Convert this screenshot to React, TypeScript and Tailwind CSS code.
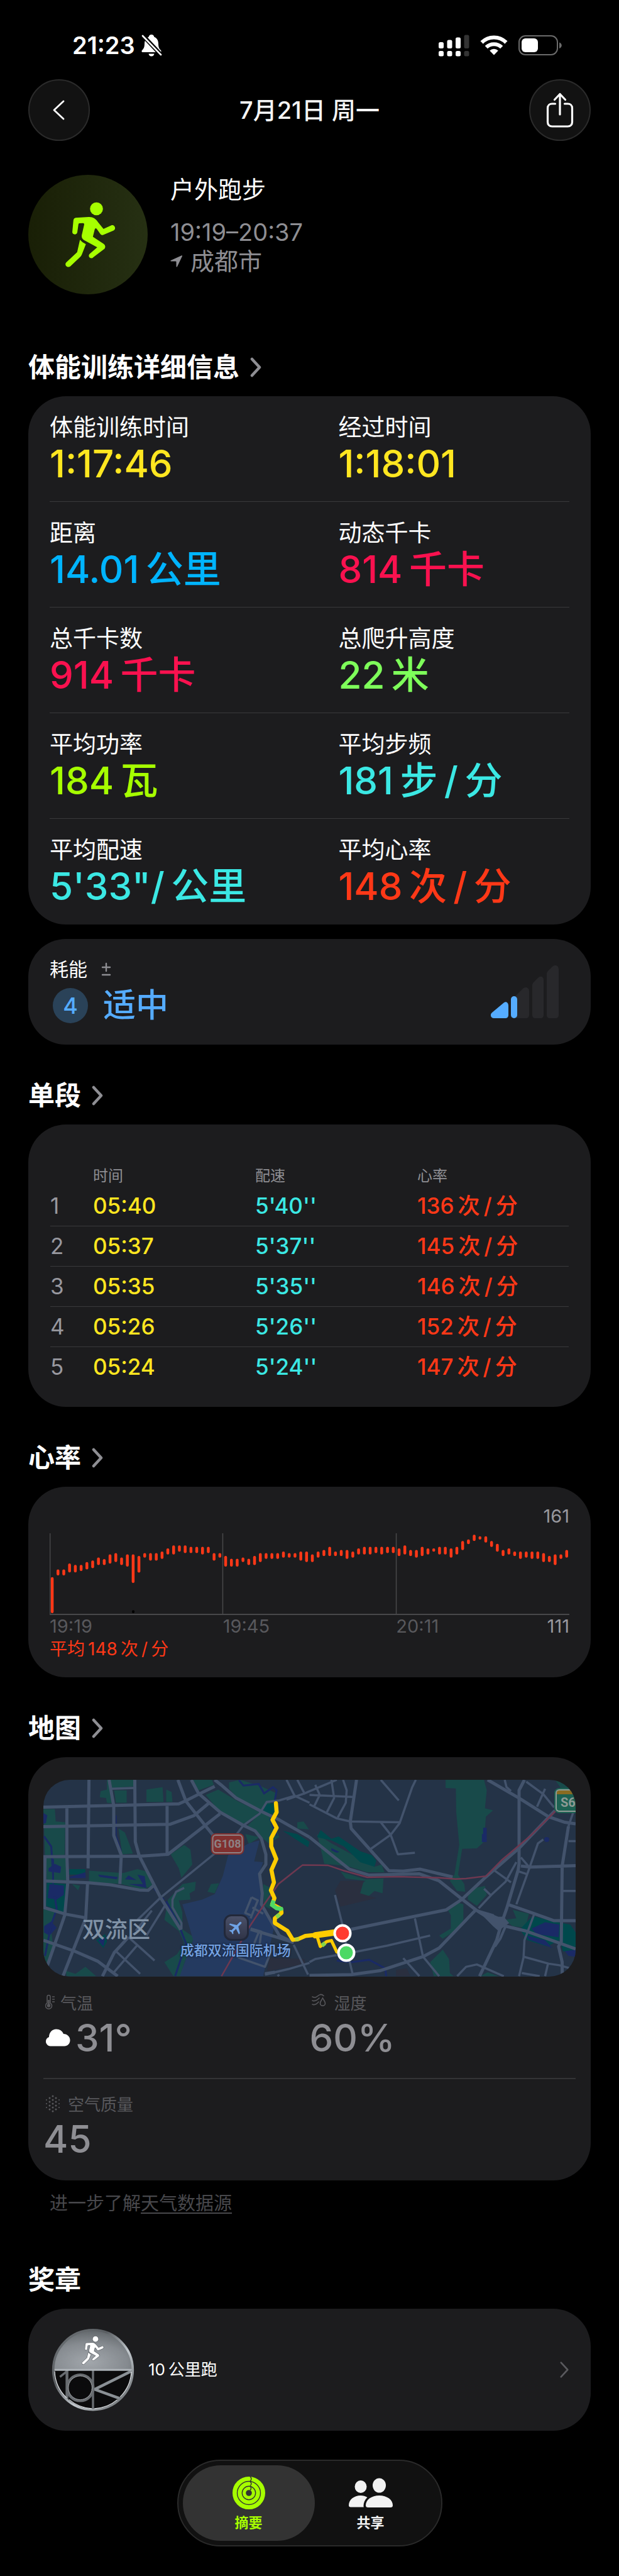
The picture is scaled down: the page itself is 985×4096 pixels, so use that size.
import { memo } from 'react'
import type { ReactNode } from 'react'
import { MdFlight } from 'react-icons/md'

type Metric = { label: string; value: string; color: string }

const METRICS: Metric[][] = [
  [
    { label: '体能训练时间', value: '1:17:46', color: 'text-[#ffe620]' },
    { label: '经过时间', value: '1:18:01', color: 'text-[#ffe620]' },
  ],
  [
    { label: '距离', value: '14.01\u2009公里', color: 'text-[#00b4ff]' },
    { label: '动态千卡', value: '814\u2009千卡', color: 'text-[#fa114f]' },
  ],
  [
    { label: '总千卡数', value: '914\u2009千卡', color: 'text-[#fa114f]' },
    { label: '总爬升高度', value: '22\u2009米', color: 'text-[#7eff5a]' },
  ],
  [
    { label: '平均功率', value: '184\u2009瓦', color: 'text-[#a6ff00]' },
    { label: '平均步频', value: '181\u2009步\u2009/\u2009分', color: 'text-[#3be8e4]' },
  ],
  [
    { label: '平均配速', value: `5'33"/\u2009公里`, color: 'text-[#3be8e4]' },
    { label: '平均心率', value: '148\u2009次\u2009/\u2009分', color: 'text-[#ff3817]' },
  ],
]

const LAPS = [
  { time: '05:40', pace: "5'40''", bpm: 136 },
  { time: '05:37', pace: "5'37''", bpm: 145 },
  { time: '05:35', pace: "5'35''", bpm: 146 },
  { time: '05:26', pace: "5'26''", bpm: 152 },
  { time: '05:24', pace: "5'24''", bpm: 147 },
]

// [top, bottom] of each heart rate range
const HEART: [number, number][] = [
  [783, 970], [743, 774], [743, 774], [712, 758], [720, 758], [720, 751], [705, 743], [697, 736], [681, 720],
  [689, 720], [665, 712], [658, 704], [681, 720], [665, 728], [665, 813], [673, 759], [658, 681], [658, 697],
  [658, 697], [650, 688], [634, 665], [618, 665], [618, 650], [618, 658], [626, 658], [626, 658], [626, 665],
  [626, 658], [658, 697], [658, 681], [673, 728], [688, 728], [688, 728], [681, 704], [688, 720], [673, 720],
  [658, 704], [658, 688], [658, 688], [658, 688], [650, 681], [658, 681], [658, 681], [650, 697], [650, 704],
  [665, 704], [650, 681], [642, 673], [626, 673], [650, 673], [642, 673], [642, 688], [650, 681], [634, 665],
  [626, 665], [626, 665], [626, 658], [626, 665], [626, 658], [626, 658], [634, 673], [618, 665], [642, 673],
  [642, 681], [626, 673], [634, 665], [634, 650], [626, 665], [626, 665], [634, 681], [626, 665], [595, 642],
  [587, 611], [563, 595], [571, 587], [571, 603], [595, 626], [610, 650], [642, 673], [634, 665], [650, 673],
  [650, 688], [650, 681], [650, 688], [650, 688], [658, 704], [673, 704], [665, 720], [665, 688], [642, 681],
]

// Icons
const RunnerShape = () => (
  <g fill="currentColor">
    <circle cx="228" cy="72" r="41.5" />
    <path d="M95 130 178 125C205 124 222 135 237 157L273 201 322 179C345 170 358 203 336 212L276 238C266 243 258 240 252 232L230 201Q221 192 217 203L205 252 274 297Q291 309 280 328L208 383C194 399 168 380 184 362L233 319 148 273Q130 262 134 240L149 174Q150 164 142 164L119 165Q112 165 112 173L105 222C103 242 71 240 73 220L80 146Q82 132 95 130Z" />
    <path d="M122 271Q135 288 160 299L134 366Q131 374 125 380L60 441C42 455 18 432 35 415L104 350Z" />
  </g>
)

const Chevron = ({ className }: { className: string }) => (
  <svg className={className} viewBox="0 0 20 32" fill="none" stroke="currentColor" strokeLinecap="round" strokeLinejoin="round" aria-hidden="true">
    <path d="M4 3 16 16 4 29" />
  </svg>
)

const StatusBar = () => (
  <div className="flex items-center justify-between pl-[115px] pr-[91px] h-9">
    <div className="flex items-center gap-[9px] text-white">
      <span className="text-[38px] leading-9 font-semibold">21:23</span>
      <svg className="w-[34px] h-9" viewBox="0 0 34 36" aria-label="静音">
        <path fill="#fff" d="M17 1c2.400 0 4 1.500 4.400 3.700C26 6.500 28 10.500 28 15.500c0 6 1.800 8.500 4 10.500 1 1.200.600 3-1 3H3C1.300 29 1 27.200 2 26c2.200-2.200 4-4.500 4-10.500 0-5 2.300-9 6.600-10.800C13 2.500 14.600 1 17 1ZM12.500 31.500h9C21 34 19.300 35.500 17 35.500s-4-1.500-4.500-4Z" />
        <path stroke="#000" strokeWidth="6.500" d="M3 2 32 33" />
        <path stroke="#fff" strokeWidth="2.600" strokeLinecap="round" d="M3 3 32 33" />
      </svg>
    </div>
    <div className="flex items-center gap-[17px]">
      <svg className="w-[49px] h-9" viewBox="0 0 49 36" fill="#fff" aria-hidden="true">
        <rect x="0" y="13" width="8" height="10" rx="2.500" />
        <rect x="13.500" y="9.500" width="8" height="13.500" rx="2.500" />
        <rect x="27" y="5.500" width="8" height="17.500" rx="2.500" />
        <rect x="40.500" y="1.500" width="8" height="21.500" rx="2.500" fill="#333" />
        <rect x="0" y="27" width="8" height="8.500" rx="2.500" />
        <rect x="13.500" y="27" width="8" height="8.500" rx="2.500" />
        <rect x="27" y="27" width="8" height="8.500" rx="2.500" />
        <rect x="40.500" y="27" width="8" height="8.500" rx="2.500" fill="#333" />
      </svg>
      <svg className="w-11 h-9" viewBox="0 0 44 36" fill="none" stroke="#fff" strokeWidth="6" aria-hidden="true">
        <path d="M2.600 13.500a27.500 27.500 0 0 1 38.800 0" />
        <path d="M9.800 21.200a17.300 17.300 0 0 1 24.400 0" />
        <path fill="#fff" stroke="none" d="M22 33.500 15.200 26.600a9.800 9.800 0 0 1 13.600 0Z" />
      </svg>
      <svg className="w-[69px] h-9" viewBox="0 0 69 36" aria-hidden="true">
        <rect x="1" y="3" width="61" height="30" rx="10" fill="none" stroke="#6b6b6b" strokeWidth="2" />
        <rect x="5" y="7" width="26" height="22" rx="6" fill="#fff" />
        <path d="M65 13.500c5 1.500 5 8 0 9.500Z" fill="#6b6b6b" />
      </svg>
    </div>
  </div>
)

const circleButton =
  'flex items-center justify-center w-[98px] h-[98px] text-white bg-[#121212] rounded-full border-2 border-[#2b2b2b]'

const Toolbar = () => (
  <header className="flex justify-between items-center mt-9">
    <button className={circleButton} aria-label="返回">
      <svg className="w-5 h-8" viewBox="0 0 20 32" fill="none" stroke="currentColor" strokeWidth="2.800" strokeLinecap="round" strokeLinejoin="round">
        <path d="M17 2 2 16 17 30" />
      </svg>
    </button>
    <h1 className="text-[38px] leading-[48px] font-medium text-[#f5f5f5]">7月21日 周一</h1>
    <button className={circleButton} aria-label="共享">
      <svg className="w-11 h-14" viewBox="0 0 44 56" fill="none" stroke="currentColor" strokeWidth="3.200" strokeLinecap="round" strokeLinejoin="round">
        <path d="M14.500 18H9.500C5.500 18 2.500 20.500 2.500 25v22c0 4.500 3 7 7 7h25c4 0 7-2.500 7-7V25c0-4.500-3-7-7-7h-5" />
        <path d="M22 35V2.500M13.500 11.500 22 2.500l8.500 9" />
      </svg>
    </button>
  </header>
)

const Workout = () => (
  <section className="flex gap-9 mt-[54px]">
    <div className="flex shrink-0 items-center justify-center w-[190px] h-[190px] rounded-full bg-linear-to-r from-[#191f06] to-[#263013] text-[#a6ff00]">
      <svg className="w-[90px] h-[106px]" viewBox="-8 25 363 425" aria-hidden="true">
        <RunnerShape />
      </svg>
    </div>
    <div className="text-[38px] leading-[46px]">
      <p className="text-white">户外跑步</p>
      <p className="mt-[22px] text-[#8e8e93]">19:19–20:37</p>
      <p className="flex items-center gap-[13px] text-[#8e8e93]">
        <svg className="w-[19px] h-[19px]" viewBox="0 0 19 19" fill="currentColor" aria-hidden="true">
          <path d="M18 .300c.800-.300 1.200.200 1 1l-8 16.600c-.500.900-1.500.700-1.500-.300V10.400c0-.500-.300-.800-.800-.800H1.200c-1 0-1.200-1.100-.300-1.600Z" />
        </svg>
        成都市
      </p>
    </div>
  </section>
)

const SectionTitle = ({ children, link = true }: { children: ReactNode; link?: boolean }) => (
  <h2 className="mb-[18px] text-[42px] leading-[56px] font-bold text-white">
    {link ? (
      <a href="#" className="inline-flex items-center gap-4">
        {children}
        <Chevron className="w-5 h-8 text-[#8e8e93] stroke-[4.500]" />
      </a>
    ) : (
      children
    )}
  </h2>
)

const card = 'bg-[#1c1c1e] rounded-[60px]'

const Details = () => (
  <section className="mt-[88px]">
    <SectionTitle>体能训练详细信息</SectionTitle>
    <div className={`${card} px-[34px]`}>
      {METRICS.map((row) => (
        <div
          key={row[0].label}
          className="grid grid-cols-[5fr_4fr] pt-[26px] pb-[27px] border-b border-[#39393b] last:border-transparent"
        >
          {row.map((m) => (
            <div key={m.label}>
              <p className="text-[37px] leading-[48px] text-white">{m.label}</p>
              <p className={`text-[60px] leading-[66px] font-medium whitespace-nowrap ${m.color}`}>{m.value}</p>
            </div>
          ))}
        </div>
      ))}
    </div>
    <div className={`${card} flex items-center justify-between mt-[23px] pt-7 pb-7 pl-[34px] pr-[51px]`}>
      <div>
        <p className="flex items-center gap-[22px] text-[30px] leading-10 text-white">
          耗能
          <svg className="w-4 h-[22px]" viewBox="0 0 16 22" stroke="#8e8e93" strokeWidth="2.400" strokeLinecap="round" aria-hidden="true">
            <path d="M2 8h12M8 2v12M2 20h12" />
          </svg>
        </p>
        <p className="flex items-center gap-6 pl-[5px] mt-1 text-[52px] leading-[68px] font-medium text-[#55acff]">
          <span className="flex items-center justify-center w-14 h-14 text-[36px] leading-10 bg-[#2a4258] rounded-full">4</span>
          适中
        </p>
      </div>
      <svg className="w-[108px] h-[84px]" viewBox="0 0 108 84" aria-hidden="true">
        <path fill="#28282b" d="M37 51 51 37c4-4 10-2 10 4v37c0 4-2 6-5 6H37ZM66 32c0-3 1-4 3-6l6-6c4-4 9-2 9 3v56c0 3-2 5-5 5h-8c-3 0-5-2-5-5ZM89 14c0-3 1-4 3-6l6-6c4-4 10-2 10 4v73c0 3-2 5-5 5h-9c-3 0-5-2-5-5Z" />
        <path fill="#55acff" d="M2 75 20 60c4-4 8-1 8 4v15c0 3-2 5-5 5H5c-5 0-7-6-3-9Z" />
        <rect x="32" y="49" width="10" height="35" rx="5" fill="#55acff" />
      </svg>
    </div>
  </section>
)

const Laps = () => (
  <section className="mt-[53px]">
    <SectionTitle>单段</SectionTitle>
    <div className={`${card} px-[35px] pt-[67px] pb-8`}>
      <table className="w-full table-fixed text-left">
        <thead>
          <tr className="h-[30px] text-2xl leading-[30px] text-[#8e8e93]">
            <th className="w-[68px]" aria-label="序号" />
            <th className="w-[258px] font-normal">时间</th>
            <th className="w-[258px] font-normal">配速</th>
            <th className="font-normal">心率</th>
          </tr>
        </thead>
        <tbody>
          {LAPS.map((lap, i) => (
            <tr key={lap.time} className="h-16 text-[35px] leading-[48px] border-b border-[#39393b] last:border-0">
              <td className="text-[#98989f]">{i + 1}</td>
              <td className="font-medium text-[#ffe620]">{lap.time}</td>
              <td className="font-medium text-[#3be8e4]">{lap.pace}</td>
              <td className="font-medium whitespace-nowrap text-[#ff3817]">{`${lap.bpm}\u2009次\u2009/\u2009分`}</td>
            </tr>
          ))}
        </tbody>
      </table>
    </div>
  </section>
)

const HeartRate = () => (
  <section className="mt-[53px]">
    <SectionTitle>心率</SectionTitle>
    <div className={`${card} px-[34px] py-[27px] text-[29px] leading-9`}>
      <p className="text-right leading-10 text-[#98989f]">161</p>
      <svg className="block mt-[7px] w-full h-[130px]" viewBox="125 555 1318 425" preserveAspectRatio="none" aria-label="心率图表">
        <g stroke="#48484a" strokeWidth="1.500">
          <path vectorEffect="non-scaling-stroke" d="M126 555V980M564 555V980M1004 555V980" />
          <path vectorEffect="non-scaling-stroke" strokeWidth="2" d="M125 977H1443" />
        </g>
        <path vectorEffect="non-scaling-stroke" stroke="#000" strokeWidth="4" strokeLinecap="round" d="M337 961V964" />
        {HEART.map(([top, bottom], i) => (
          <path
            key={i}
            vectorEffect="non-scaling-stroke"
            stroke="#ff3817"
            strokeWidth="4.500"
            strokeLinecap="round"
            d={`M${131.5 + i * 14.66} ${top + 7}V${bottom - 7}`}
          />
        ))}
      </svg>
      <div className="grid grid-cols-3 text-[#58585c]">
        <span>19:19</span>
        <span>19:45</span>
        <span className="flex justify-between">
          20:11 <span className="text-[#98989f]">111</span>
        </span>
      </div>
      <p className="text-[28px] text-[#ff3817]">{'平均\u2009148\u2009次\u2009/\u2009分'}</p>
    </div>
  </section>
)

// Map
const WIDE_ROADS = [
  'M86 208 840 187 878 168 960 120 1040 75',
  'M86 333 790 318 925 262 1010 180',
  'M86 525 620 522 780 510 1070 250',
  'M217 215 217 520 222 690 205 900 100 1250',
  'M340 33 335 600M332 700 322 920 195 1290',
  'M452 33 478 200 478 390 520 515 512 700',
  'M595 33 598 430 620 520 740 790 850 990M775 200V510',
  'M86 680 340 692 460 705 620 738 670 740 700 710',
  'M95 520 92 850M86 850 210 893 330 918',
  'M835 33 880 170 990 330 1040 400M910 33 950 120 1070 240 1200 325 1265 360 1300 410 1325 510 1325 575 1290 635 1305 760 1300 830 1400 1030 1480 1075',
  'M1040 33 1075 65 1160 150 1300 235 1400 290 1568 400',
  'M1568 400 1730 550 1790 605 1900 643 2180 635 2290 680 2415 795 2500 870 2610 950 2660 970 2770 1000 3050 1115',
  'M86 1060 260 1130 390 1195 500 1290',
  'M415 1290 480 1140 560 1040',
  'M1320 1275 1375 1265',
  'M1568 1285 1800 1280 1960 1255 2200 1165 2290 1110 2490 870',
  'M2560 33 2735 150 2900 270 2990 305 3050 315',
  'M2765 33 2735 100 2735 570 2730 610 2665 860 2635 960 2610 1060 2515 1290',
  'M1800 990 2330 865 2415 800 2550 655 2740 465 2935 230',
  'M1830 33 1795 300 1800 345 2010 615 2090 618 2185 605 2365 655',
  'M2745 585 2800 592 3050 582M3010 330 2975 585 2970 1070 2955 1100 2975 1200 2975 1290',
  'M2670 830 2820 890 2930 935 3050 935M1240 990 1400 1045 1480 1075',
]
const ROADS = [
  'M465 90 590 85M1440 33 1485 135 1568 180M1485 135 1400 165 1330 175 1290 250 1200 325 1150 400',
  'M1500 33 1540 120 1720 33M1040 505 740 785 610 930M870 725 825 750 805 800 805 850 855 950 855 985 840 990',
  'M765 835 660 1030M600 1000 690 870M560 1040 705 1190M490 1130 625 1275M610 1090 475 1270',
  'M1540 120 1440 160M1568 130 1810 143M1600 65 1625 130 1595 200M1690 33 1705 150 1665 240M1755 33 1775 100 1770 180 1725 275',
  'M1568 190 1720 280 1795 300 2075 305M1965 33 2065 165M2160 33 2140 80 2070 310 2020 385 1910 475M1965 305 2020 385 2060 510 2155 500',
  'M1710 770 1750 955 1790 1190 1810 1285M1820 1135 2000 1095 2240 1030M2155 920 2200 1165 2290 1290',
  'M1568 1200 1600 1180 1720 1155M1390 1290 1400 1280M2090 1175 2180 1290M2390 1290 2440 1230 2500 1215 2650 1290',
  'M2510 855 2580 770 2660 685 2720 560M2540 730 2580 775M2600 615 2690 690M2735 620 2775 635',
  'M2720 830 2795 590 2840 440 2870 415M2745 530 2790 590M2820 890 2765 1060 2760 1170 2735 1290',
  'M2775 45 2870 125 2930 210M2880 90 2835 205M2655 33 2665 80 2690 105M3040 230 3010 330',
  'M3010 425 3050 425M2980 745 3050 745M2760 1165 2900 1210 2960 1220 3050 1250M2895 1215 2880 1290M2750 1270 2850 1290',
  'M1480 1090 1560 1280M1170 1170 1320 1230 1365 1100M1320 1280 1450 1245 1568 1205M1245 785 1280 805 1240 920M1245 785 1210 885 1240 900',
  'M1260 1080 1285 1010M1240 985 1300 1005 1290 1090M1250 850 1310 890',
]

const Pin = ({ className }: { className: string }) => (
  <span className={`absolute w-[29px] h-[29px] rounded-full border-4 border-white -translate-1/2 ${className}`} />
)

const RouteMap = () => (
  <div className="relative h-[313px] overflow-hidden rounded-[42px] bg-[#243347]">
    <svg className="block w-full h-full" viewBox="86 33 2964 1260" preserveAspectRatio="none" aria-hidden="true">
      <g fill="#184a4a">
        <path d="M440 33H590V75L470 85 480 185 440 180 435 150 400 145 405 105 440 95ZM480 100H550V180H490ZM660 95 750 80 755 175H660ZM770 95 800 110 805 175H770Z" />
        <path d="M86 220H150L155 300 208 305 205 515H95ZM505 345 540 370 585 505 525 510ZM920 33H1025L1035 65 950 100ZM990 130 1060 95 1160 165 1290 240 1230 300 1195 315 1070 240ZM1120 50 1180 33 1290 70 1385 120 1375 165 1290 235 1160 140 1120 90Z" />
        <path d="M1300 240 1360 280 1400 400 1340 440 1300 400 1220 330ZM1210 380 1290 400 1230 445ZM795 510 870 450 905 480 915 575 855 660 840 600ZM860 700 935 685 930 740 900 760 905 800 840 805 860 880 860 990 925 1040 870 1210 850 1290H810L760 1200 830 1150 870 1080 840 1000 760 930 780 800 830 740Z" />
        <path d="M340 615 530 630 610 605 660 620 695 710 640 735 520 700 340 685ZM245 700 290 710 280 740ZM1000 750 1020 700 1065 695 1040 760ZM86 860 150 880 130 1000 140 1100 100 1240 86 1230ZM210 1255 265 1275 320 1230 380 1290H215ZM1310 700 1345 720 1350 860 1315 840ZM100 535 215 535 215 675H105Z" />
        <path d="M2326 33H2540L2555 100 2545 215 2590 228 2550 270 2540 430 2500 472 2418 475 2395 640 2430 700 2435 750 2390 745 2350 680 2375 640 2402 450 2385 240 2383 88 2326 85ZM2450 780 2490 725 2545 712 2555 770 2500 840 2450 800ZM2340 870 2400 820 2425 830 2425 930 2390 990 2310 1050 2290 1030 2355 985 2355 900Z" />
        <path d="M1640 520 1610 380 1690 440 1930 590 1970 575 1985 625 1890 625 1790 590 1740 580 1650 570ZM1740 620 1880 670 1980 665 1975 760 1930 745 1895 780 1850 760 1835 720 1880 680 1770 665ZM1500 305 1535 300 1565 350 1500 345ZM2700 865 2790 890 2770 980 2700 970 2650 930 2720 920ZM2260 1290 2240 1200 2310 1120 2345 1180 2350 1270 2370 1290ZM2520 1290 2560 1265 2620 1290ZM2935 33 3050 60V90H2970Z" />
      </g>
      <g fill="#00484c">
        <path d="M230 605H320V640H230ZM105 690 215 700 200 880 100 840ZM1325 190 1385 180 1390 260 1305 240ZM1420 360 1500 380 1568 430 1560 465 1500 420ZM1610 400 1630 355 1690 410 1730 395 1850 490 1915 515 1940 550 1930 590 1850 560 1760 460 1690 420Z" />
        <path d="M2810 905 2930 940 3020 960 3050 1010V1140L2980 1130 2960 1060 2890 1100 2780 1060 2740 990ZM380 1060 430 1020 440 1070 420 1110Z" />
      </g>
      <path fill="#243a60" d="M1115 515 1230 440 1290 420 1260 555 1310 560 1285 640 1305 830 1370 980 1310 1290H845L880 1180 920 1060 890 940 860 830 970 800 1040 765 1085 650Z" />
      <path fill="#2a2f3f" d="M1345 1170 1540 1180 1545 1210 1330 1260ZM1740 680 1870 680 1850 760 1940 790 1740 845 1710 740ZM2050 1250 2110 1240 2130 1290H2050Z" />
      <g fill="#1a2a66">
        <path d="M86 245 108 260 100 310 86 315ZM115 600 150 570 185 590 180 630 115 620ZM120 700 200 710 200 770 160 800 110 790ZM90 970 130 940 160 980 120 1030 90 1010ZM232 655 320 625 322 662H232ZM390 640 500 655 495 670 400 655ZM540 670 560 645 605 675ZM610 640 650 650 660 725 560 700 640 700ZM390 1060 430 1040 420 1100Z" />
        <path d="M2535 340H2555V432H2528V380H2535ZM2875 415A14 16 0 1 1 2903 415 14 16 0 1 1 2875 415ZM2805 985 2880 945 2960 960 2955 1040 2830 1020ZM2780 1030 2880 1060 2920 1110 2790 1055ZM2990 1130 3050 1120V1165L3010 1160ZM1690 470 1735 495 1720 500 1690 485Z" />
      </g>
      <g fill="none" stroke="#1a2a66" strokeWidth="3">
        <path vectorEffect="non-scaling-stroke" d="M1175 35 1200 70 1285 60 1315 120 1365 80 1385 100 1375 165M90 395 130 460 140 640M140 540V700M150 780 160 860 130 960 95 1160M770 810 840 960 880 1080 820 1290M1720 1190 1800 1200 1900 1185 1990 1240 1995 1290M1350 280 1385 390" />
        <path vectorEffect="non-scaling-stroke" strokeWidth="1.500" d="M492 260V390L520 490M700 730 760 800" />
      </g>
      <g fill="none" stroke="#43536c" strokeLinejoin="round">
        {WIDE_ROADS.map((d) => (
          <path key={d} d={d} vectorEffect="non-scaling-stroke" strokeWidth="5" />
        ))}
        {ROADS.map((d) => (
          <path key={d} d={d} vectorEffect="non-scaling-stroke" strokeWidth="3.500" />
        ))}
        <path vectorEffect="non-scaling-stroke" strokeWidth="4" d="M2660 970 2630 1050 2600 1100M2500 870 2590 900 2610 960" />
      </g>
      <path fill="#43536c" d="M2500 865 2590 895 2620 910H2650L2680 950 2620 1000 2590 970Z" />
      <path
        vectorEffect="non-scaling-stroke"
        fill="none"
        stroke="#6e3850"
        strokeWidth="2.500"
        d="M1078 1290 1140 1165 1230 980 1310 840 1395 700 1500 605 1530 578 1670 580 1760 615 1890 657 2060 653 2290 660 2380 668 2440 665 2550 650 2640 545 2800 390 2945 225"
      />
      <g fill="none" stroke="#ffcc00" strokeWidth="6.500" strokeLinecap="round" strokeLinejoin="round">
        <path vectorEffect="non-scaling-stroke" d="M1381 183 1385 240 1362 290 1385 340 1355 405 1355 460 1383 540 1356 610 1370 690 1353 740 1373 790 1360 830 1410 860 1412 885 1375 920 1375 950 1445 1000 1475 1057 1500 1055 1545 1032 1740 1010" />
        <path vectorEffect="non-scaling-stroke" strokeWidth="10" d="M1600 1028 1720 1008" />
        <path vectorEffect="non-scaling-stroke" strokeWidth="5" d="M1612 1040 1628 1100 1665 1068 1690 1062 1720 1135" />
      </g>
      <g fill="none" stroke="#4fd964" strokeWidth="6.500">
        <path vectorEffect="non-scaling-stroke" d="M1368 805 1360 835 1385 855 1410 860 1412 870" />
        <path vectorEffect="non-scaling-stroke" stroke="#86d548" d="M1403 895 1383 912M1637 1095 1655 1078" />
        <path vectorEffect="non-scaling-stroke" stroke="#c0d22e" d="M1487 1056 1510 1051" />
      </g>
    </svg>
    <span className="absolute left-[13.7%] top-[76%] -translate-1/2 text-[36px] leading-10 font-medium whitespace-nowrap text-[#8092a6]">
      双流区
    </span>
    <span className="absolute left-[36.2%] top-[75%] -translate-1/2 flex items-center justify-center w-10 h-[42px] rounded-xl border-[3px] border-[#22283a] bg-linear-to-b from-[#4a5068] to-[#303448] text-[#6fa3e6]">
      <MdFlight className="w-7 h-7 rotate-45" />
    </span>
    <span className="absolute left-[36.1%] top-[86.5%] -translate-1/2 text-[22px] leading-7 font-medium whitespace-nowrap text-[#74a3e4] [text-shadow:0_0_3px_#17233a,0_0_3px_#17233a]">
      成都双流国际机场
    </span>
    <span className="absolute left-[34.6%] top-[32.6%] -translate-1/2 p-0.5 rounded-lg bg-[#80302f]">
      <span className="block w-[49px] h-[30px] rounded-md border-2 border-[#8d8184] text-center text-[18px] leading-[26px] font-bold text-[#8d8184] font-['Roboto']">
        G108
      </span>
    </span>
    <span className="absolute right-0 top-[4%] py-0.5 pl-0.5 rounded-l-lg bg-[#1d6152]">
      <span className="block w-8 h-9 pl-1.5 rounded-l-md border-2 border-r-0 border-[#8d9a95] bg-linear-to-b from-[#8a6c22] from-20% to-[#1d6152] to-20% text-[20px] leading-[38px] font-bold text-[#8d9a95] font-['Roboto']">
        S6
      </span>
    </span>
    <Pin className="left-[56.2%] top-[78%] bg-[#ff3b30]" />
    <Pin className="left-[56.9%] top-[88%] bg-[#4cd964]" />
  </div>
)

const AIR_DOTS = [
  [12, 2], [7, 5], [17, 5], [2, 8], [12, 8], [22, 8], [7, 11], [17, 11], [2, 14], [12, 14], [22, 14],
  [7, 17], [17, 17], [2, 20], [12, 20], [22, 20], [7, 23], [17, 23], [12, 26],
]

const Weather = ({ icon, label, children }: { icon: ReactNode; label: string; children: ReactNode }) => (
  <div>
    <p className="flex items-center pl-[3px] text-[26px] leading-10 text-[#58585c]">
      {icon}
      {label}
    </p>
    <p className="flex items-center gap-2 text-[60px] leading-[68px] font-medium text-[#8e8e93]">{children}</p>
  </div>
)

const MapSection = () => (
  <section className="mt-[53px]">
    <SectionTitle>地图</SectionTitle>
    <div className={`${card} px-6 pt-9 pb-8`}>
      <RouteMap />
      <div className="grid grid-cols-2 pt-[23px] pb-[30px] border-b-2 border-[#343436]">
        <Weather
          label="气温"
          icon={
            <svg className="w-4 h-6 mr-2 mb-1.5" viewBox="0 0 16 24" fill="none" stroke="currentColor" strokeWidth="1.500" aria-hidden="true">
              <path d="M3 14V4a2.500 2.500 0 0 1 5 0v10a5 5 0 1 1-5 0ZM11 4h4M11 8h4M11 12h4" />
              <path strokeWidth="2.500" d="M5.500 9v8" />
              <circle cx="5.500" cy="18" r="2" fill="currentColor" />
            </svg>
          }
        >
          <svg className="w-10 h-7 ml-[3px]" viewBox="0 0 40 28" fill="#fff" aria-hidden="true">
            <path d="M8 27.500a7.500 7.500 0 0 1-2-14.600C6 6 11 .500 17.500.500c5.500 0 10 3 11.500 7.500 6 0 10.500 4.500 10.500 10s-4 9.500-9 9.500Z" />
          </svg>
          31°
        </Weather>
        <Weather
          label="湿度"
          icon={
            <svg className="w-6 h-5 mr-3 mb-3" viewBox="0 0 24 20" fill="none" stroke="currentColor" strokeWidth="1.600" strokeLinecap="round" aria-hidden="true">
              <path d="M1 5c4 2 6 1 9-1.500s6-3 9 0M1 11c4 2 7 0 11-4M1 17c4 2 7-.500 10-4M17.500 7c2 4 4 5.500 4 8.500a4 3.800 0 0 1-8 0c0-3 2-4.500 4-8.500Z" />
            </svg>
          }
        >
          60%
        </Weather>
      </div>
      <div className="pt-[21px]">
        <Weather
          label="空气质量"
          icon={
            <svg className="w-6 h-7 mr-3 mb-1" viewBox="0 0 24 28" fill="currentColor" aria-hidden="true">
              {AIR_DOTS.map(([x, y]) => (
                <circle key={`${x}-${y}`} cx={x} cy={y} r={x === 2 || x === 22 ? 1.1 : 1.5} />
              ))}
            </svg>
          }
        >
          45
        </Weather>
      </div>
    </div>
    <p className="mt-[17px] pl-[34px] text-[29px] leading-10 text-[#48484c]">
      进一步了解
      <a href="#" className="underline underline-offset-4 decoration-2">
        天气数据源
      </a>
    </p>
  </section>
)

const Medal = () => (
  <svg className="w-[132px] h-[132px]" viewBox="28 30 532 532" aria-hidden="true">
    <defs>
      <linearGradient id="rim" x1="0" y1="0" x2="1" y2="1">
        <stop offset="0" stopColor="#6f7478" />
        <stop offset=".35" stopColor="#5a5e62" />
        <stop offset=".6" stopColor="#c3c9ce" />
        <stop offset="1" stopColor="#55595c" />
      </linearGradient>
      <radialGradient id="plate" cx=".45" cy=".8" r=".8">
        <stop offset="0" stopColor="#a2a7ac" />
        <stop offset=".6" stopColor="#868b90" />
        <stop offset="1" stopColor="#63686c" />
      </radialGradient>
    </defs>
    <path fill="#0b0b0c" d="M40 297a254 254 0 0 0 508 0Z" />
    <path fill="url(#plate)" d="M42 297a252 252 0 0 1 504 0Z" />
    <g fill="none" stroke="#686c70" strokeWidth="14">
      <path d="M294 300V550M82 342 125 308" />
      <path strokeWidth="18" d="M127 300V490" />
      <path stroke="#8a9095" strokeWidth="18" d="M540 305 305 422 465 480" />
      <circle cx="212" cy="412" r="84" strokeWidth="16" />
    </g>
    <circle cx="212" cy="412" r="76" fill="none" stroke="#c4c7ca" strokeWidth="3" />
    <path stroke="#aeb4b9" strokeWidth="12" d="M36 297H552" />
    <circle cx="294" cy="297" r="255" fill="none" stroke="url(#rim)" strokeWidth="15" />
    <path fill="none" stroke="#e4e7ea" strokeWidth="5" d="M48 306A246 246 0 0 0 126 477M140 487A246 246 0 0 0 286 545M303 545A246 246 0 0 0 450 488M468 470A246 246 0 0 0 540 308" />
    <g transform="translate(211 68) scale(.434)" className="text-white" stroke="#50555a" strokeWidth="10" paintOrder="stroke">
      <RunnerShape />
    </g>
  </svg>
)

const Awards = () => (
  <section className="mt-[73px]">
    <SectionTitle link={false}>奖章</SectionTitle>
    <a href="#" className={`${card} flex items-center pl-[37px] pr-[33px] py-[31px]`}>
      <Medal />
      <span className="grow pl-[22px] text-[26px] leading-9 text-white">{'10\u2009公里跑'}</span>
      <Chevron className="w-[18px] h-7 text-[#5a5a5e] stroke-[3]" />
    </a>
  </section>
)

const TabBar = () => (
  <nav className="flex gap-1 self-center mt-[46px] mb-12 p-[7px] w-[422px] bg-[#111] rounded-full border-2 border-[#2a2a2a]">
    <button className="flex flex-col items-center pt-[18px] pb-3.5 w-[210px] rounded-full bg-[#333] text-[#a6ff00]" aria-current="page">
      <svg className="w-[52px] h-[52px]" viewBox="0 0 52 52" fill="none" stroke="currentColor" aria-hidden="true">
        <circle cx="26" cy="26" r="22.600" strokeWidth="6.800" />
        <circle cx="26" cy="26" r="14.600" strokeWidth="6.400" />
        <circle cx="26" cy="26" r="7.400" strokeWidth="5.200" />
        <path stroke="#333" strokeWidth="1.500" d="M28 0c2.500 1.500 2.500 5.500 0 7M28 8c2.500 1.500 2.500 5 0 6.500M28 15.500c2 1.500 2 4.500 0 6" />
      </svg>
      <span className="mt-1.5 text-[22px] leading-[30px] font-bold">摘要</span>
    </button>
    <button className="flex flex-col grow items-center pt-[18px] pb-3.5 pr-5 rounded-full text-[#f2f2f2]">
      <svg className="w-[70px] h-[52px]" viewBox="0 0 70 52" fill="currentColor" aria-hidden="true">
        <ellipse cx="19" cy="16" rx="9.500" ry="10" />
        <ellipse cx="48.500" cy="14" rx="10.500" ry="11.500" />
        <path d="M3 48.500c-2 0-3-1-3-3C0 37 8 30 19 30c4 0 7.500 1 10.500 3-4 4-6 8.500-6 13 0 1 0 1.700.300 2.500Z" />
        <path d="M31 49c-3 0-4-1-4-3.500C27 37 36 30 48.500 30S70 37 70 45.500c0 2.500-1 3.500-4 3.500Z" />
      </svg>
      <span className="mt-1.5 text-[22px] leading-[30px] font-semibold">共享</span>
    </button>
  </nav>
)

// App
const App = memo(() => {
  return (
    <main className="flex flex-col pt-[54px] min-h-screen bg-black font-['Inter','Noto_Sans_CJK_SC',sans-serif]" lang="zh-CN">
      <StatusBar />
      <div className="flex flex-col px-[45px]">
        <Toolbar />
        <Workout />
        <Details />
        <Laps />
        <HeartRate />
        <MapSection />
        <Awards />
        <TabBar />
      </div>
    </main>
  )
})

App.displayName = 'App'

export default App
